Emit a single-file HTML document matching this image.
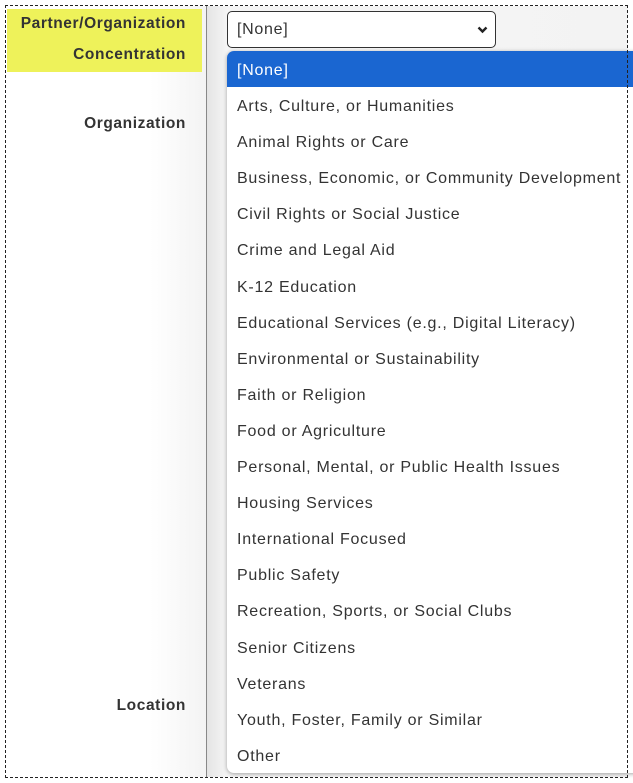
<!DOCTYPE html>
<html><head><style>
html,body{margin:0;padding:0;width:633px;height:783px;overflow:hidden;background:#fff;font-family:"Liberation Sans",sans-serif;}
.frame{position:absolute;left:5px;top:5px;width:621px;height:771px;border:1px dashed #222;}
.yellow{position:absolute;left:7px;top:9px;width:195px;height:63px;background:#eef25a;}
.lbl{position:absolute;right:447px;font-weight:bold;font-size:15.5px;letter-spacing:0.6px;color:#333;text-align:right;white-space:nowrap;}
.right{position:absolute;left:206px;top:6px;width:421px;height:771px;border-left:1px solid #888;background:linear-gradient(90deg,#e4e4e4,#f5f5f5 20px,#f3f3f3);}
.lg{position:absolute;left:150px;top:6px;width:56px;height:771px;background:linear-gradient(90deg,#fff,#f3f3f3);}
.sel{position:absolute;left:227px;top:11px;width:269px;height:37px;border:1px solid #333;border-radius:5px;background:#fff;font-size:16px;letter-spacing:0.7px;color:#333;box-sizing:border-box;padding:9px 0 0 9px;}
.dd{position:absolute;left:227px;top:51px;width:420px;height:722px;background:#fff;border-radius:7px;box-shadow:0 1px 4px rgba(0,0,0,.35);overflow:hidden;}
.it{height:36.1px;line-height:36px;box-sizing:border-box;padding:2px 0 0 10px;font-size:16px;letter-spacing:0.75px;color:#333;white-space:nowrap;}
.it.s{background:#1a66d1;color:#fff;}
</style></head><body>
<div class="lg"></div>
<div class="right"></div>
<div class="yellow"></div>
<div class="lbl" style="top:15px">Partner/Organization</div>
<div class="lbl" style="top:46px">Concentration</div>
<div class="lbl" style="top:115px">Organization</div>
<div class="lbl" style="top:697px">Location</div>
<div class="sel">[None]<svg style="position:absolute;right:7px;top:14px" width="11" height="8" viewBox="0 0 11 8"><path d="M1.5 1.5L5.5 5.5L9.5 1.5" stroke="#222" stroke-width="2.4" fill="none"/></svg></div>
<div class="dd">
<div class="it s">[None]</div>
<div class="it">Arts, Culture, or Humanities</div>
<div class="it">Animal Rights or Care</div>
<div class="it">Business, Economic, or Community Development</div>
<div class="it">Civil Rights or Social Justice</div>
<div class="it">Crime and Legal Aid</div>
<div class="it">K-12 Education</div>
<div class="it">Educational Services (e.g., Digital Literacy)</div>
<div class="it">Environmental or Sustainability</div>
<div class="it">Faith or Religion</div>
<div class="it">Food or Agriculture</div>
<div class="it">Personal, Mental, or Public Health Issues</div>
<div class="it">Housing Services</div>
<div class="it">International Focused</div>
<div class="it">Public Safety</div>
<div class="it">Recreation, Sports, or Social Clubs</div>
<div class="it">Senior Citizens</div>
<div class="it">Veterans</div>
<div class="it">Youth, Foster, Family or Similar</div>
<div class="it">Other</div>
</div>
<div class="frame"></div>
</body></html>
